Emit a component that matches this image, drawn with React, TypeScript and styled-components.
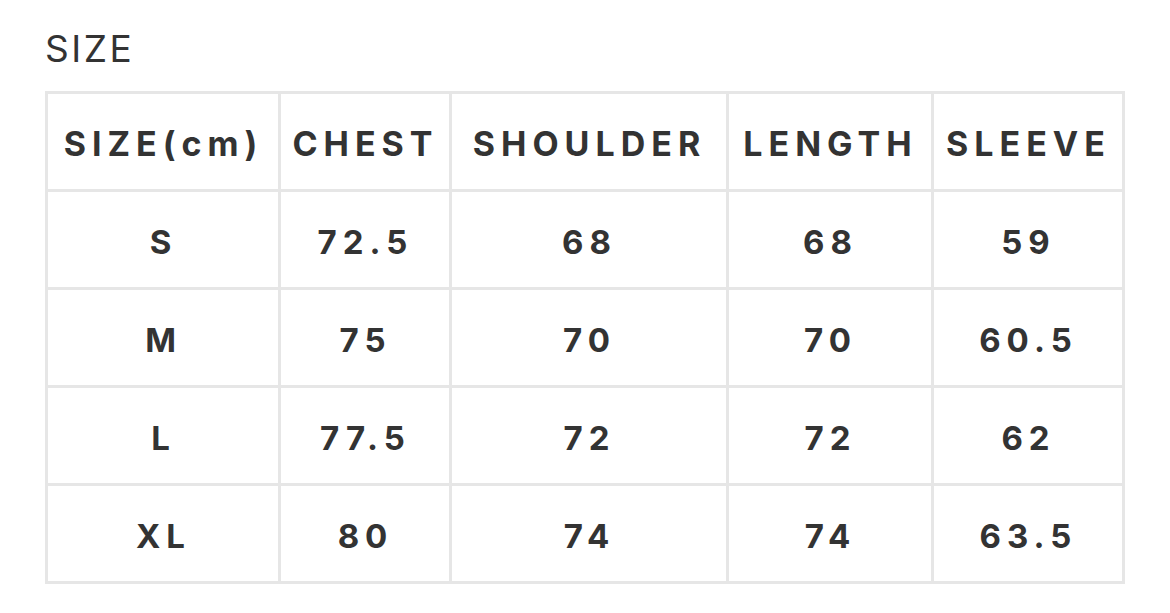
import styled, { createGlobalStyle } from "styled-components";

type Row = [string, string, string, string, string];

const headers: Row = ["SIZE(cm)", "CHEST", "SHOULDER", "LENGTH", "SLEEVE"];
const rows: Row[] = [
  ["S", "72.5", "68", "68", "59"],
  ["M", "75", "70", "70", "60.5"],
  ["L", "77.5", "72", "72", "62"],
  ["XL", "80", "74", "74", "63.5"],
];
const widths = [233, 171, 277, 205, 191];

function App() {
  return (
    <>
      <GlobalStyle />
      <Page>
        <Title>SIZE</Title>
        <SizeTable>
          <colgroup>
            {widths.map((w, i) => (
              <Col key={i} $w={w} />
            ))}
          </colgroup>
          <thead>
            <tr>
              {headers.map((h) => (
                <HeadCell key={h}>{h}</HeadCell>
              ))}
            </tr>
          </thead>
          <tbody>
            {rows.map((r) => (
              <tr key={r[0]}>
                {r.map((v, i) => (
                  <Cell key={i}>{v}</Cell>
                ))}
              </tr>
            ))}
          </tbody>
        </SizeTable>
      </Page>
    </>
  );
}

const GlobalStyle = createGlobalStyle`
  body {
    margin: 0;
    background: #fff;
    font-family: Inter, "Liberation Sans", sans-serif;
    color: #333;
  }
`;

const Page = styled.div`
  padding: 29px 0 0 45px;
`;

const Title = styled.h2`
  margin: 0 0 22px;
  font-size: 37px;
  font-weight: 400;
  line-height: 40px;
  letter-spacing: 2.5px;
  color: #333;
`;

const SizeTable = styled.table`
  border-collapse: collapse;
  table-layout: fixed;
  width: 1080px;
  border: 3px solid #e6e6e6;
`;

const Col = styled.col<{ $w: number }>`
  width: ${(p) => p.$w}px;
`;

const HeadCell = styled.th`
  height: 91px;
  padding: 4px 0 0 1px;
  border: 3px solid #e6e6e6;
  font-size: 34px;
  font-weight: 700;
  letter-spacing: 6px;
  text-align: center;
  color: #333;
  white-space: nowrap;
`;

const Cell = styled.td`
  height: 91px;
  padding: 4px 0 0 1px;
  border: 3px solid #e6e6e6;
  font-size: 33px;
  font-weight: 700;
  letter-spacing: 6px;
  text-align: center;
  color: #333;
`;

export default App;
